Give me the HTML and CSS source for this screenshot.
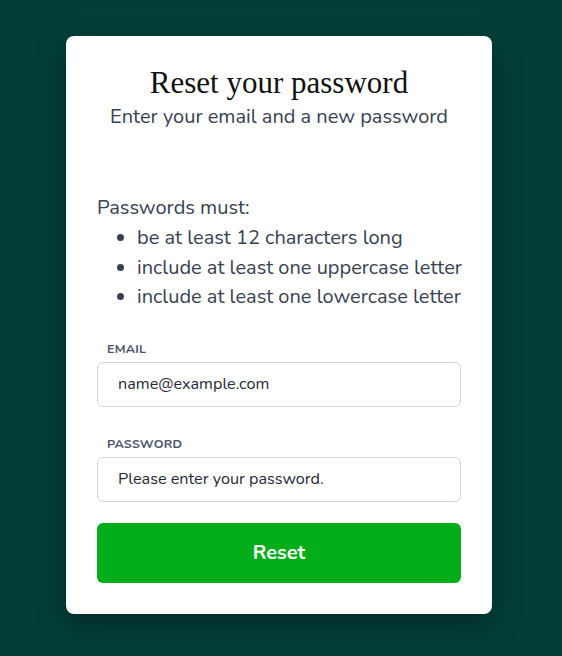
FILE: index.html
```html
<!DOCTYPE html>
<html lang="en">
<head>
<meta charset="utf-8">
<title>Reset your password</title>
<link rel="stylesheet" href="styles.css">
</head>
<body>
<main class="page">
  <section class="card">
    <header class="head">
      <h1 class="title">Reset your password</h1>
      <p class="subtitle">Enter your email and a new password</p>
    </header>
    <div class="rules">
      <p class="rules-lead">Passwords must:</p>
      <ul class="rules-list">
        <li>be at least 12 characters long</li>
        <li>include at least one uppercase letter</li>
        <li>include at least one lowercase letter</li>
      </ul>
    </div>
    <form class="form">
      <label class="field">
        <span class="label">EMAIL</span>
        <input class="input" type="email" placeholder="name@example.com">
      </label>
      <label class="field">
        <span class="label">PASSWORD</span>
        <input class="input" type="password" placeholder="Please enter your password.">
      </label>
      <button class="btn" type="button">Reset</button>
    </form>
  </section>
</main>
</body>
</html>
```
FILE: styles.css
```css
* { box-sizing: border-box; }
html, body { margin: 0; padding: 0; }
body {
  background: #033f39;
  font-family: "Nunito", "Lato", "Noto Sans", sans-serif;
  color: #374151;
  min-height: 656px;
}
.page {
  display: flex;
  justify-content: flex-start;
  padding: 36px 0 0 66px;
}
.card {
  width: 426px;
  background: #fff;
  border-radius: 8px;
  padding: 31px 31px 31px;
  box-shadow: 0 10px 30px rgba(0,0,0,0.35);
}
.head { text-align: center; }
.title {
  margin: 0;
  font-family: "Liberation Serif", serif;
  font-weight: normal;
  font-size: 31px;
  line-height: 32px;
  color: #111;
}
.subtitle {
  margin: 5px 0 0;
  font-size: 20px;
  line-height: 26px;
  color: #374151;
}
.rules { margin-top: 64px; }
.rules-lead {
  margin: 0;
  font-size: 20px;
  line-height: 28px;
}
.rules-list {
  margin: 1px 0 0;
  padding-left: 40px;
  font-size: 20px;
  line-height: 29.5px;
}
.rules-list li { white-space: nowrap; }
.form {
  margin-top: 29px;
  display: flex;
  flex-direction: column;
}
.field {
  display: flex;
  flex-direction: column;
  margin-bottom: 21px;
}
.field + .field { margin-top: 8px; }
.label {
  font-size: 12.5px;
  font-weight: 700;
  color: #4a5568;
  letter-spacing: 0.2px;
  padding-left: 10px;
  margin-bottom: 5px;
  line-height: 16px;
}
.input {
  height: 45px;
  border: 1px solid #d1d5db;
  border-radius: 6px;
  padding: 0 20px;
  font-family: inherit;
  font-size: 16.2px;
  color: #1f2937;
  background: #fff;
}
.input::placeholder { color: #1f2937; opacity: 1; }
.btn {
  height: 60px;
  border: 0;
  border-radius: 6px;
  background: #01ae19;
  color: #fff;
  font-family: inherit;
  font-size: 20px;
  font-weight: 700;
}
```
